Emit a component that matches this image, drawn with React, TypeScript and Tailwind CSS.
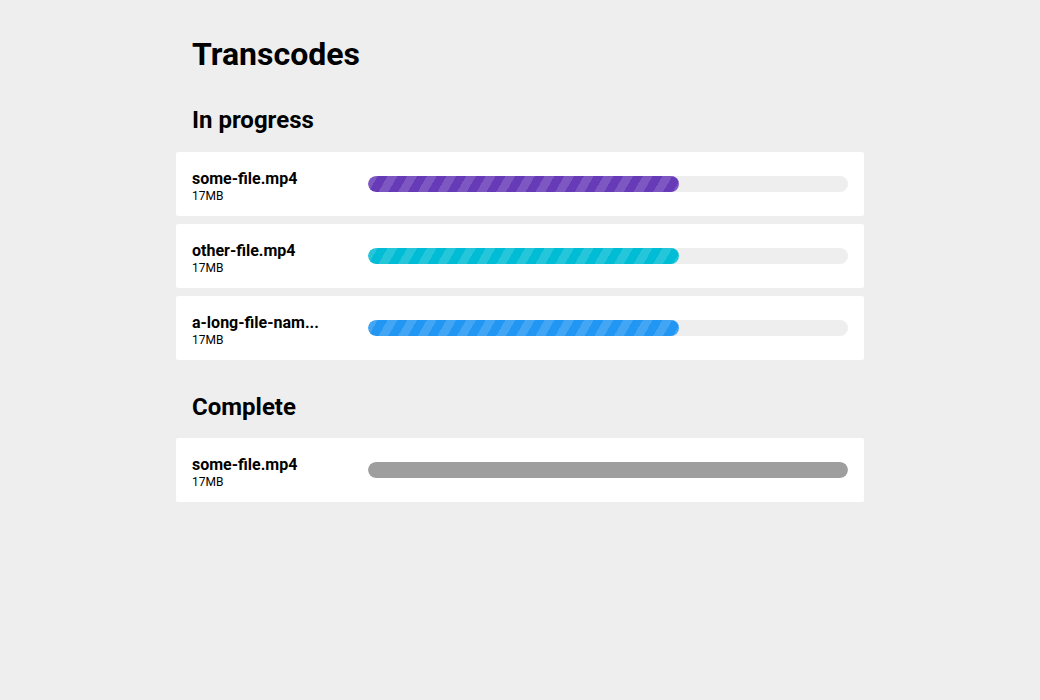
import React from 'react'

type Transcode = {
  id: number
  name: string
  size: string
  progress: number
  bar: string
}

const inProgress: Transcode[] = [
  { id: 1, name: 'some-file.mp4', size: '17MB', progress: 64.8, bar: 'bg-[#673ab7]' },
  { id: 2, name: 'other-file.mp4', size: '17MB', progress: 64.8, bar: 'bg-[#00bcd4]' },
  { id: 3, name: 'a-long-file-nam...', size: '17MB', progress: 64.8, bar: 'bg-[#2196f3]' },
]

const complete: Transcode[] = [
  { id: 4, name: 'some-file.mp4', size: '17MB', progress: 100, bar: 'bg-[#9e9e9e]' },
]

function Row({ item, striped }: { item: Transcode; striped: boolean }) {
  return (
    <li className="flex h-16 items-center gap-4 rounded-[2px] bg-white px-4">
      <div className="w-[160px] shrink-0 pt-[5px]">
        <p className="text-[16px] font-bold leading-[18px] text-black">{item.name}</p>
        <p className="mt-[1px] text-[12px] leading-[14px] text-black">{item.size}</p>
      </div>
      <div className="h-4 flex-1 overflow-hidden rounded-full bg-[#eeeeee]">
        <div
          className={`h-full rounded-full ${item.bar} ${
            striped
              ? 'bg-[repeating-linear-gradient(120deg,rgba(255,255,255,0.15)_0px,rgba(255,255,255,0.15)_8.5px,transparent_8.5px,transparent_17px)]'
              : ''
          }`}
          style={{ width: `${item.progress}%` }}
        />
      </div>
    </li>
  )
}

export default function App() {
  return (
    <div className="min-h-screen bg-[#eeeeee] font-['Roboto',sans-serif] text-black">
      <div className="mx-auto w-[688px] pt-[34px]">
        <h1 className="px-4 text-[32px] font-bold leading-[40px]">Transcodes</h1>

        <h2 className="mt-[30px] px-4 text-[24px] font-bold leading-[32px]">In progress</h2>
        <ul className="mt-[16px] space-y-2">
          {inProgress.map((t) => (
            <Row key={t.id} item={t} striped />
          ))}
        </ul>

        <h2 className="mt-[31px] px-4 text-[24px] font-bold leading-[32px]">Complete</h2>
        <ul className="mt-[15px] space-y-2">
          {complete.map((t) => (
            <Row key={t.id} item={t} striped={false} />
          ))}
        </ul>
      </div>
    </div>
  )
}
